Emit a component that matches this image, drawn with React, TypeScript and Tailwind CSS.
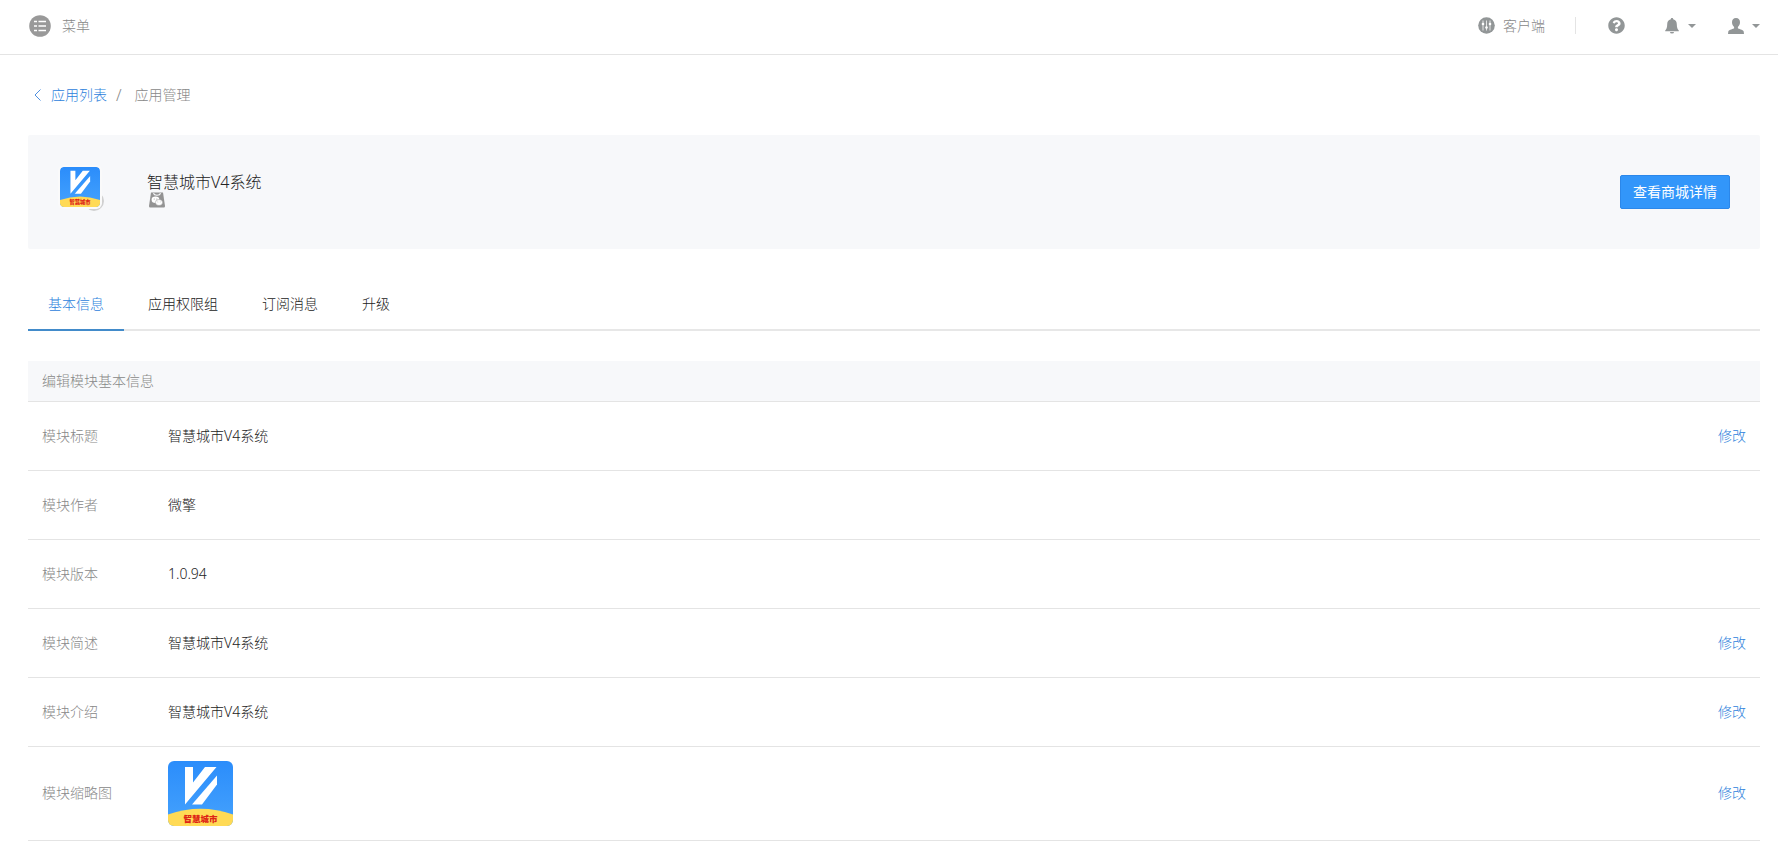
import type { ReactNode } from 'react';
import { FaQuestionCircle } from 'react-icons/fa';

interface InfoRow {
  label: string;
  value: ReactNode;
  editable?: boolean;
}

const tabs = ['基本信息', '应用权限组', '订阅消息', '升级'];

const AppLogo = ({ className }: { className: string }) => (
  <svg viewBox="0 0 65 65" className={className} role="img" aria-label="智慧城市">
    <defs>
      <linearGradient id="logo-blue" x1="0" y1="0" x2="0" y2="1">
        <stop offset="0" stopColor="#2b8dfb" />
        <stop offset="1" stopColor="#45a2fd" />
      </linearGradient>
      <clipPath id="logo-clip">
        <rect width="65" height="65" rx="6" />
      </clipPath>
    </defs>
    <g clipPath="url(#logo-clip)">
      <rect width="65" height="65" fill="url(#logo-blue)" />
      <path d="M17 6h8v15.500L37 6h11.500L17 43.500z" fill="#fff" />
      <path d="M49 14.500v9L34 43.500h-10z" fill="#fff" />
      <path d="M0 53.500Q32.500 42 65 53.500V65H0z" fill="#ffda55" />
      <text
        x="32.500"
        y="60.500"
        textAnchor="middle"
        fontSize="8.500"
        fontWeight="900"
        fill="#dd2415"
      >
        智慧城市
      </text>
    </g>
  </svg>
);

const MenuIcon = () => (
  <svg viewBox="0 0 22 22" className="size-[22px]" aria-hidden="true">
    <circle cx="11" cy="11" r="10.800" fill="#999" />
    <path
      d="M5 6.500h3M9.500 6.500h7.500M5 11h3M9.500 11h7.500M5 15.500h3M9.500 15.500h7.500"
      stroke="#fff"
      strokeWidth="1.600"
    />
  </svg>
);

const ClientIcon = () => (
  <svg viewBox="0 0 17 17" className="size-[17px]" aria-hidden="true">
    <circle cx="8.500" cy="8.500" r="8.300" fill="#929697" />
    <path d="M5 3.500v10M8.500 3.500v10M12 3.500v10" stroke="#e4e5e5" strokeWidth="1" />
    <circle cx="5" cy="7" r="1.300" fill="#fff" />
    <circle cx="8.500" cy="10.500" r="1.300" fill="#fff" />
    <circle cx="12" cy="7" r="1.300" fill="#fff" />
  </svg>
);

const BellIcon = () => (
  <svg viewBox="0 0 14 16" className="h-4 w-3.5" fill="#929697" aria-hidden="true">
    <path d="M7 0c.8 0 1.200.5 1.200 1.200C10.700 1.800 11.800 3.800 11.800 6.200c0 3.500.8 5 2 6.300v.8H.2v-.8c1.200-1.300 2-2.800 2-6.300 0-2.400 1.100-4.400 3.600-5C5.800.5 6.200 0 7 0z" />
    <path d="M5 14h4a2 1.600 0 0 1-4 0z" />
  </svg>
);

const UserIcon = () => (
  <svg viewBox="0 0 16 16" className="size-4" fill="#929697" aria-hidden="true">
    <path d="M8 0c2.600 0 4 1.700 4 4.300 0 2-.9 3.800-2.100 4.700v1.300c.4.8 5.200 1.300 5.800 3.200l.3 2.500H0l.3-2.500c.6-1.900 5.400-2.400 5.800-3.200V9C4.900 8.100 4 6.300 4 4.300 4 1.700 5.400 0 8 0z" />
  </svg>
);

const Caret = () => (
  <svg viewBox="0 0 8 4" className="h-1 w-2" fill="#929697" aria-hidden="true">
    <path d="M0 0h8L4 4z" />
  </svg>
);

const MiniProgramIcon = () => (
  <svg viewBox="0 0 16 16" className="size-4" role="img" aria-label="微信">
    <path d="M2 .5h12l2 13.500c0 1-.6 1.500-1.500 1.500h-13C.6 15.500 0 15 0 14z" fill="#939393" />
    <path d="M4.500 1.200C5.200 4 10.800 4 11.500 1.200" fill="none" stroke="#f7f8f9" strokeWidth="1.100" />
    <ellipse cx="6.500" cy="7.800" rx="3.900" ry="3.200" fill="#fff" />
    <ellipse cx="10" cy="10.500" rx="3.600" ry="3" fill="#fff" stroke="#939393" strokeWidth=".5" />
    <g fill="#939393">
      <circle cx="5.200" cy="7" r=".5" />
      <circle cx="7.900" cy="6.900" r=".5" />
      <circle cx="8.900" cy="9.900" r=".45" />
      <circle cx="11.200" cy="9.900" r=".45" />
    </g>
  </svg>
);

const rows: InfoRow[] = [
  { label: '模块标题', value: '智慧城市V4系统', editable: true },
  { label: '模块作者', value: '微擎' },
  { label: '模块版本', value: '1.0.94' },
  { label: '模块简述', value: '智慧城市V4系统', editable: true },
  { label: '模块介绍', value: '智慧城市V4系统', editable: true },
  { label: '模块缩略图', value: <AppLogo className="size-[65px]" />, editable: true },
];

const Header = () => (
  <header className="flex h-[55px] items-center justify-between border-b border-[#e4e4e4] pr-[18px] pb-[3px] pl-[29px] text-[#888]">
    <button type="button" className="flex items-center gap-[11px]">
      <MenuIcon />
      <span>菜单</span>
    </button>
    <div className="flex items-center">
      <button type="button" className="flex items-center gap-2">
        <ClientIcon />
        <span>客户端</span>
      </button>
      <div className="mr-8 ml-[30px] h-[17px] w-px bg-[#e4e4e4]" />
      <button type="button" aria-label="帮助">
        <FaQuestionCircle className="size-[17px] text-[#929697]" />
      </button>
      <button type="button" aria-label="消息" className="ml-10 flex items-center gap-[9px]">
        <BellIcon />
        <Caret />
      </button>
      <button type="button" aria-label="用户" className="ml-8 flex items-center gap-2">
        <UserIcon />
        <Caret />
      </button>
    </div>
  </header>
);

const Breadcrumb = () => (
  <nav className="flex h-20 items-center pl-1.5">
    <a href="#list" className="flex items-center gap-2.5 text-[#2d82dc]">
      <svg viewBox="0 0 7 12" className="h-3 w-[7px]" fill="none" stroke="#4f90e0" aria-hidden="true">
        <path d="M6.500.5L1 6l5.500 5.500" />
      </svg>
      应用列表
    </a>
    <span className="mx-[9px] text-base text-[#888]">/</span>
    <span className="pl-1 text-[#888]">应用管理</span>
  </nav>
);

export default function App() {
  return (
    <div className="bg-white font-['Noto_Sans','Noto_Sans_CJK_SC',sans-serif] text-sm leading-5 font-light text-[#222]">
      <Header />
      <main className="pr-[18px] pl-7">
        <Breadcrumb />

        <section className="flex h-[114px] items-center rounded-xs bg-[#f7f8fa] pr-[30px] pl-8">
          <div className="relative mb-2.5 size-10">
            <span className="absolute -right-1 -bottom-1 size-5 rounded-full border-2 border-[#d0d0d0]" />
            <AppLogo className="relative size-10 rounded-sm ring-2 ring-[#fafafa]" />
          </div>
          <div className="mb-1 ml-[47px] flex-1">
            <h1 className="text-base leading-5">智慧城市V4系统</h1>
            <div className="pl-0.5">
              <MiniProgramIcon />
            </div>
          </div>
          <button
            type="button"
            className="h-[34px] rounded-xs border border-[#2b87ea] bg-[#3296fa] px-3 font-normal text-white"
          >
            查看商城详情
          </button>
        </section>

        <div role="tablist" className="mt-7 flex h-[54px] gap-1 border-b-2 border-[#e7e7e7]">
          {tabs.map((tab, index) => (
            <button
              key={tab}
              type="button"
              role="tab"
              aria-selected={index === 0}
              className={
                index === 0
                  ? '-mb-0.5 border-b-2 border-[#428bca] px-5 pt-0.5 text-[#2d82dc]'
                  : '-mb-0.5 border-b-2 border-transparent px-5 pt-0.5'
              }
            >
              {tab}
            </button>
          ))}
        </div>

        <table className="mt-[30px] w-full">
          <thead>
            <tr className="h-10 border-b border-[#e4e4e4] bg-[#f7f8fa]">
              <th colSpan={3} className="px-3.5 text-left font-light text-[#888]">
                编辑模块基本信息
              </th>
            </tr>
          </thead>
          <tbody>
            {rows.map(({ label, value, editable }) => (
              <tr key={label} className="h-[69px] border-b border-[#e4e4e4]">
                <th scope="row" className="w-[140px] pl-3.5 text-left font-light text-[#888]">
                  {label}
                </th>
                <td className={typeof value === 'string' ? '' : 'py-3.5'}>{value}</td>
                <td className="w-20 pr-3.5 text-right">
                  {editable && (
                    <a href="#edit" className="text-[#2d82dc]">
                      修改
                    </a>
                  )}
                </td>
              </tr>
            ))}
          </tbody>
        </table>
      </main>
    </div>
  );
}
